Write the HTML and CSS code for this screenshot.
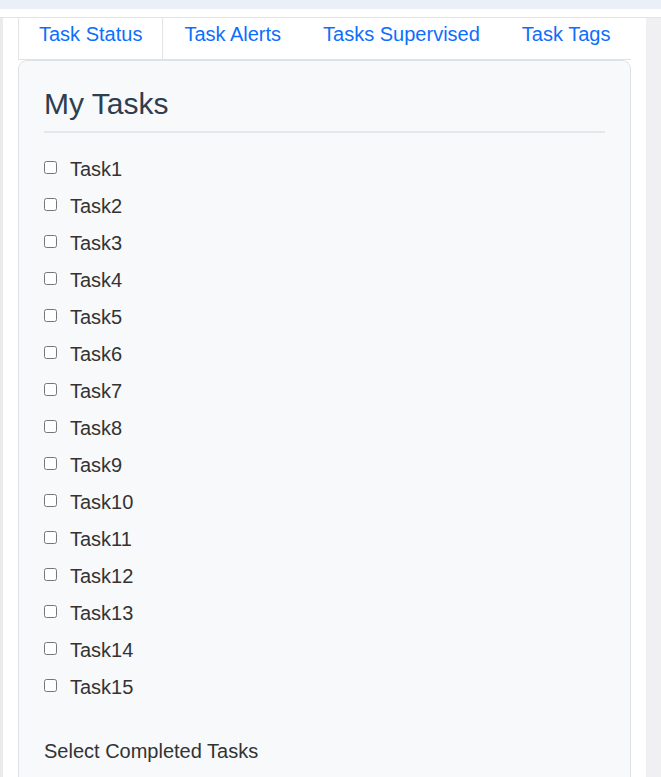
FILE: index.html
```html
<!DOCTYPE html>
<html lang="en">
<head>
<meta charset="utf-8">
<title>My Tasks</title>
<link rel="stylesheet" href="styles.css">
</head>
<body>
<div class="topband"></div>
<div class="topgap"></div>
<div class="main">
  <div class="side side-left"></div>
  <div class="content">
    <ul class="tabs">
      <li class="tab tab-first"><a href="#">Task Status</a></li>
      <li class="tab"><a href="#">Task Alerts</a></li>
      <li class="tab"><a href="#">Tasks Supervised</a></li>
      <li class="tab"><a href="#">Task Tags</a></li>
    </ul>
    <div class="card">
      <h2 class="card-title">My Tasks</h2>
      <div class="task-list">
        <label class="task"><input type="checkbox"><span>Task1</span></label>
        <label class="task"><input type="checkbox"><span>Task2</span></label>
        <label class="task"><input type="checkbox"><span>Task3</span></label>
        <label class="task"><input type="checkbox"><span>Task4</span></label>
        <label class="task"><input type="checkbox"><span>Task5</span></label>
        <label class="task"><input type="checkbox"><span>Task6</span></label>
        <label class="task"><input type="checkbox"><span>Task7</span></label>
        <label class="task"><input type="checkbox"><span>Task8</span></label>
        <label class="task"><input type="checkbox"><span>Task9</span></label>
        <label class="task"><input type="checkbox"><span>Task10</span></label>
        <label class="task"><input type="checkbox"><span>Task11</span></label>
        <label class="task"><input type="checkbox"><span>Task12</span></label>
        <label class="task"><input type="checkbox"><span>Task13</span></label>
        <label class="task"><input type="checkbox"><span>Task14</span></label>
        <label class="task"><input type="checkbox"><span>Task15</span></label>
      </div>
      <p class="select-note">Select Completed Tasks</p>
    </div>
  </div>
  <div class="side side-right"></div>
</div>
</body>
</html>
```
FILE: styles.css
```css
* { box-sizing: border-box; }
html, body { margin: 0; padding: 0; height: 100%; }
body {
  background: #ffffff;
  font-family: "Liberation Sans", Arial, sans-serif;
  color: #333333;
  overflow: hidden;
  display: flex;
  flex-direction: column;
}
.topband { height: 9px; background: #ebeff8; flex-shrink: 0; }
.topgap { height: 9px; border-bottom: 1px solid #e2e3e5; flex-shrink: 0; }
.main { display: flex; flex: 1; min-height: 0; overflow: hidden; }
.side-left { width: 3px; background: #ebebed; flex-shrink: 0; }
.side-right { width: 15px; background: #f0f0f2; flex-shrink: 0; }
.content { flex: 1; min-width: 0; padding: 0 15px; display: flex; flex-direction: column; }

.tabs {
  list-style: none;
  margin: 0;
  padding: 0;
  display: flex;
  border-bottom: 1px solid #dfe1e4;
  flex-shrink: 0;
}
.tab { flex-shrink: 0; }
.tab a {
  display: block;
  padding: 1px 21px 10px;
  line-height: 30px;
  font-size: 20px;
  white-space: nowrap;
  color: #0d6efd;
  text-decoration: none;
}
.tab-first {
  border-left: 1px solid #e3e4e6;
  border-right: 1px solid #e3e4e6;
}
.tab-first a { padding-left: 20px; padding-right: 20px; }

.card {
  flex: 1;
  background: #f8f9fa;
  border: 1px solid #dee2e6;
  border-bottom: none;
  border-radius: 9px 9px 0 0;
  padding: 22px 25px 0;
}
.card-title {
  margin: 0;
  font-size: 30px;
  font-weight: normal;
  line-height: 42px;
  color: #2c3e50;
  padding-bottom: 6px;
  border-bottom: 2px solid #e5e7ea;
}
.task-list {
  display: flex;
  flex-direction: column;
  padding-top: 18px;
}
.task {
  display: flex;
  align-items: center;
  height: 37px;
  font-size: 20px;
  color: #333333;
}
.task input {
  width: 13px;
  height: 13px;
  margin: -4px 13px 0 0;
}
.select-note {
  margin: 30px 0 0;
  font-size: 20px;
  line-height: 30px;
  color: #333333;
}
```
